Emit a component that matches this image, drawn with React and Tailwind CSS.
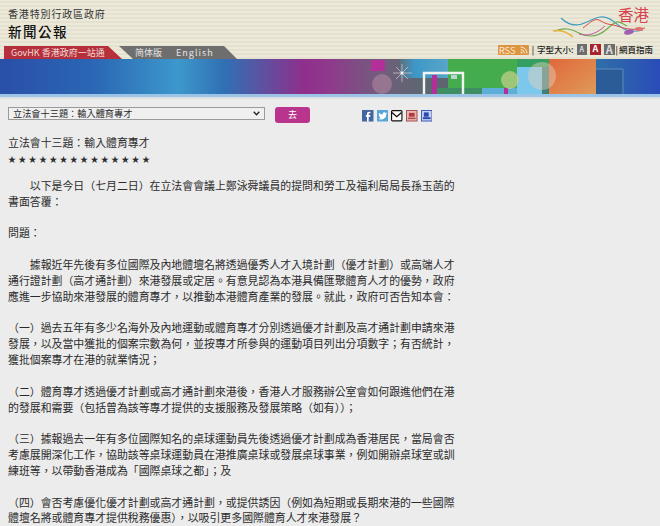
import React from 'react';

const cjk = { fontFamily: '"Noto Sans CJK TC", "Noto Sans", sans-serif' };

const paragraphs = [
    ['　　以下是今日（七月二日）在立法會會議上鄭泳舜議員的提問和勞工及福利局局長孫玉菡的', '書面答覆：'],
    ['問題：'],
    ['　　據報近年先後有多位國際及內地體壇名將透過優秀人才入境計劃（優才計劃）或高端人才', '通行證計劃（高才通計劃）來港發展或定居。有意見認為本港具備匯聚體育人才的優勢，政府', '應進一步協助來港發展的體育專才，以推動本港體育產業的發展。就此，政府可否告知本會：'],
    ['（一）過去五年有多少名海外及內地運動或體育專才分別透過優才計劃及高才通計劃申請來港', '發展，以及當中獲批的個案宗數為何，並按專才所參與的運動項目列出分項數字；有否統計，', '獲批個案專才在港的就業情況；'],
    ['（二）體育專才透過優才計劃或高才通計劃來港後，香港人才服務辦公室會如何跟進他們在港', '的發展和需要（包括曾為該等專才提供的支援服務及發展策略（如有））；'],
    ['（三）據報過去一年有多位國際知名的桌球運動員先後透過優才計劃成為香港居民，當局會否', '考慮展開深化工作，協助該等桌球運動員在港推廣桌球或發展桌球事業，例如開辦桌球室或訓', '練班等，以帶動香港成為「國際桌球之都」；及'],
    ['（四）會否考慮優化優才計劃或高才通計劃，或提供誘因（例如為短期或長期來港的一些國際', '體壇名將或體育專才提供稅務優惠），以吸引更多國際體育人才來港發展？'],
];

const Waves = () => (
    <svg width="95" height="24" viewBox="0 0 95 24" className="block">
        <path d="M8 4 C16 12 24 13 34 8 S50 0 60 7 S72 20 90 16" fill="none" stroke="#3f9fc0" strokeWidth="1.2" />
        <path d="M2 17 C12 13 18 15 26 19 S44 24 54 15 S64 6 74 12" fill="none" stroke="#6fae4e" strokeWidth="1.2" />
        <path d="M0 17 C8 15 14 18 20 23" fill="none" stroke="#e8b030" strokeWidth="1.4" />
        <path d="M30 14 C38 8 42 3 48 7 S58 10 64 12 S78 17 92 14" fill="none" stroke="#d84a4a" strokeWidth="1" />
        <path d="M26 20 C36 23 44 19 52 12" fill="none" stroke="#c0559a" strokeWidth="1" />
        <ellipse cx="76" cy="18" rx="5" ry="2.500" fill="#a060b0" transform="rotate(-15 76 18)" />
        <ellipse cx="86" cy="15" rx="4" ry="2" fill="#e07070" />
    </svg>
);

const Banner = () => (
    <svg width="660" height="35" viewBox="0 0 660 35" className="block">
        <defs>
            <linearGradient id="sky" x1="0" x2="1" y1="0" y2="0">
                <stop offset="0" stopColor="#2a4fa8" />
                <stop offset="0.14" stopColor="#2a66b4" />
                <stop offset="0.27" stopColor="#3d98cc" />
                <stop offset="0.34" stopColor="#3070b4" />
                <stop offset="0.46" stopColor="#8f2f8c" />
                <stop offset="0.5" stopColor="#8f3a8c" />
                <stop offset="0.58" stopColor="#6f5f7c" />
                <stop offset="0.64" stopColor="#5d6670" />
                <stop offset="1" stopColor="#5d6670" />
            </linearGradient>
            <linearGradient id="orange" x1="0" x2="1" y1="0" y2="1">
                <stop offset="0" stopColor="#e0683c" />
                <stop offset="1" stopColor="#e09a58" />
            </linearGradient>
            <linearGradient id="right" x1="0" x2="1" y1="0" y2="0">
                <stop offset="0" stopColor="#2f6fa8" />
                <stop offset="1" stopColor="#2a4cb8" />
            </linearGradient>
            <linearGradient id="aqua" x1="0" x2="1" y1="0" y2="0">
                <stop offset="0" stopColor="#5d7080" />
                <stop offset="0.3" stopColor="#3d98c8" />
                <stop offset="1" stopColor="#5aa6c8" />
            </linearGradient>
        </defs>
        <rect width="660" height="35" fill="url(#sky)" />
        <rect x="371" y="1" width="14" height="11" fill="#b52f9a" />
        <circle cx="382" cy="25" r="10" fill="#a77f98" opacity="0.7" />
        <rect x="400" y="0" width="50" height="19" fill="url(#aqua)" />
        <rect x="448" y="0" width="70" height="29" fill="#45ac4e" />
        <rect x="436" y="29" width="46" height="6" fill="#3f8d63" />
        <rect x="482" y="29" width="36" height="6" fill="#5cb0d8" />
        <rect x="517" y="0" width="33" height="8" fill="#359f63" />
        <rect x="517" y="8" width="25" height="27" fill="#7cc8ec" />
        <rect x="542" y="8" width="7" height="27" fill="#3e7f78" />
        <rect x="504" y="29" width="4" height="6" fill="#b52f9a" />
        <circle cx="510" cy="21" r="9" fill="#c6d08a" opacity="0.7" />
        <rect x="549" y="0" width="47" height="35" fill="url(#orange)" />
        <circle cx="542" cy="17" r="14" fill="#e4d0b8" opacity="0.45" />
        <rect x="596" y="0" width="64" height="35" fill="url(#right)" />
        <rect x="596" y="10" width="27" height="25" fill="#2c5c98" />
        <path d="M596 10 H623 V35" fill="none" stroke="#5a8cc0" strokeWidth="1" />
        <path d="M402 5 V23 M393 14 H412 M396 8 L408 20 M408 8 L396 20" stroke="#e8e0e8" strokeWidth="0.6" />
        <circle cx="402" cy="14" r="1.500" fill="#f4f0f4" />
        <path d="M424 35 V14 H463 V35" fill="none" stroke="#f2f2f2" strokeWidth="2.400" />
        <rect x="432" y="16" width="5" height="19" fill="#b52f9a" />
        <rect x="451" y="16" width="6" height="4" fill="#b4d8d0" />
    </svg>
);

const SocialIcons = () => (
    <div className="flex gap-[3.2px]">
        <svg width="11.500" height="11.500" viewBox="0 0 12 12"><rect width="12" height="12" fill="#44659e" /><path d="M7 12V7h1.600l.2-1.800H7V4.200c0-.5.2-.8.8-.8h1V1.800H7.600C6 1.800 5.200 2.700 5.200 4.100v1.100H4V7h1.200v5z" fill="#fff" /></svg>
        <svg width="11.500" height="11.500" viewBox="0 0 12 12"><rect width="12" height="12" fill="#58a6d8" /><path d="M10.500 3.200c-.4.2-.7.3-1.100.3.4-.2.7-.6.8-1-.4.2-.8.4-1.200.5a1.900 1.900 0 0 0-3.200 1.700C4.300 4.600 3 3.900 2.100 2.800c-.5.9-.2 2 .6 2.500-.3 0-.6-.1-.8-.2 0 .9.600 1.700 1.500 1.900-.3.1-.6.1-.8 0 .2.800.900 1.300 1.700 1.300A3.800 3.800 0 0 1 1.500 9.100 5.400 5.400 0 0 0 9.800 4.300c.3-.3.500-.7.700-1.100z" fill="#fff" /></svg>
        <svg width="11.500" height="11.500" viewBox="0 0 12 12"><rect x="0.600" y="0.600" width="10.800" height="10.800" rx="1" fill="#fff" stroke="#111" strokeWidth="1.200" /><path d="M1 2.500 6 7l5-4.500" fill="none" stroke="#111" strokeWidth="1.400" /></svg>
        <svg width="11.500" height="11.500" viewBox="0 0 12 12"><rect x="0.500" y="0.500" width="11" height="11" fill="#e8b8b0" stroke="#a84a50" /><rect x="3" y="3" width="6" height="4" fill="#b03a40" /><rect x="2" y="8" width="8" height="1.500" fill="#a84a50" /></svg>
        <svg width="11.500" height="11.500" viewBox="0 0 12 12"><rect x="0.500" y="0.500" width="11" height="11" fill="#c4d0f0" stroke="#3c58b8" /><rect x="3" y="2.500" width="5" height="4.500" fill="#2a48b0" /><rect x="2" y="7.500" width="8" height="2" fill="#2a48b0" /></svg>
    </div>
);

const App = () => {
    return (
        <div className="h-[526px] w-[660px] overflow-hidden bg-[#ececec] text-[#2b2b2b]" style={cjk}>
            <div className="h-[59px] flex justify-between bg-[repeating-linear-gradient(0deg,#e4e1cf_0px,#e4e1cf_2px,#ece9da_2px,#ece9da_4px)]">
                <div className="flex flex-col">
                    <div className="pl-2 pt-[7.500px] text-[10px] leading-[12px] tracking-[0.85px] text-[#333]">香港特別行政區政府</div>
                    <div className="pl-2 mt-[2px] text-[13.500px] leading-[18px] tracking-[1.500px] font-medium text-[#111]">新聞公報</div>
                    <div className="flex mt-[6.500px] h-[13px] pl-[4px] text-[9px] leading-[13px]">
                        <div className="w-[118px] pl-[7px] bg-[#b5303a] text-[#f0d8d8] whitespace-nowrap [clip-path:polygon(0_0,104px_0,100%_100%,0_100%)]">GovHK 香港政府一站通</div>
                        <div className="w-[118px] -ml-[3px] pl-[16px] bg-[#6e6e6e] text-[#e4e4e4] whitespace-nowrap [clip-path:polygon(0_0,105px_0,100%_100%,14px_100%)]"><span className="mr-[14px]">简体版</span><span className="tracking-[1px]">English</span></div>
                    </div>
                </div>
                <div className="flex flex-col items-end pr-[7px]">
                    <div className="relative h-[40px] w-[100px] mt-[4px]">
                        <div className="absolute right-[4px] top-0 text-[15.500px] leading-[20px] text-[#d8434d]">香港</div>
                        <div className="absolute left-0 top-[10px]"><Waves /></div>
                    </div>
                    <div className="flex items-center h-[11px] text-[8.500px] leading-[11px] font-medium text-[#222] whitespace-nowrap">
                        <span className="flex items-center justify-between bg-[#dd9440] text-[#fbe8cf] px-[1px] h-[10px] leading-[10px] rounded-[1px] text-[9.500px] font-normal w-[31px]">RSS
                            <svg width="8" height="8" viewBox="0 0 8 8"><circle cx="1.500" cy="6.500" r="1" fill="#fbe8cf" /><path d="M.5 3.500a4 4 0 0 1 4 4M.5 1a6.500 6.500 0 0 1 6.500 6.500" fill="none" stroke="#fbe8cf" strokeWidth="1" /></svg>
                        </span>
                        <span className="mx-[3px]">|</span>
                        <span>字型大小:</span>
                        <span className="ml-[3px] w-[10.500px] h-[10.500px] bg-[#6d6d6d] text-[#ddd] text-[7px] font-bold leading-[10.500px] text-center">A</span>
                        <span className="ml-[3px] w-[10.500px] h-[10.500px] bg-[#a8242c] text-white text-[9px] font-bold leading-[10.500px] text-center">A</span>
                        <span className="ml-[3.500px] w-[10.500px] h-[10.500px] bg-[#6d6d6d] text-[#ddd] text-[11px] font-bold leading-[10.500px] text-center">A</span>
                        <span className="mx-[1px]">|</span>
                        <span>網頁指南</span>
                    </div>
                </div>
            </div>
            <Banner />
            <div className="h-[3px] bg-[#9cc4e6]" />
            <div className="h-[3px] bg-gradient-to-b from-[#d6dce0] to-[#ececec]" />

            <div className="flex items-start pl-2 pt-[7px]">
                <div className="w-[257px] h-[13px] bg-[#f0f0f0] border border-[#9a9a9a] flex items-center justify-between pl-[4px] pr-[4px] text-[9.200px] leading-[11px] whitespace-nowrap">
                    <span>立法會十三題：輸入體育專才</span>
                    <svg width="7" height="5" viewBox="0 0 7 5"><path d="M.7.8 3.500 3.800 6.300.8" fill="none" stroke="#222" strokeWidth="1.300" /></svg>
                </div>
                <div className="ml-[10px] w-[35px] h-[16px] rounded-[3px] bg-[#b9358d] text-white text-[9px] leading-[16px] text-center">去</div>
                <div className="ml-[52px] mt-[3px]"><SocialIcons /></div>
            </div>

            <div className="pl-2 pt-[12px] text-[10.900px] leading-[15.850px] whitespace-nowrap">
                <div>立法會十三題：輸入體育專才</div>
                <div className="mb-[11px] text-[8px] tracking-[2.300px]">{'★'.repeat(14)}</div>
                {paragraphs.map((lines, i) => (
                    <div key={i} className="mb-[15.850px]">
                        {lines.map((line, j) => <div key={j}>{line}</div>)}
                    </div>
                ))}
            </div>
        </div>
    );
};

export default App;
